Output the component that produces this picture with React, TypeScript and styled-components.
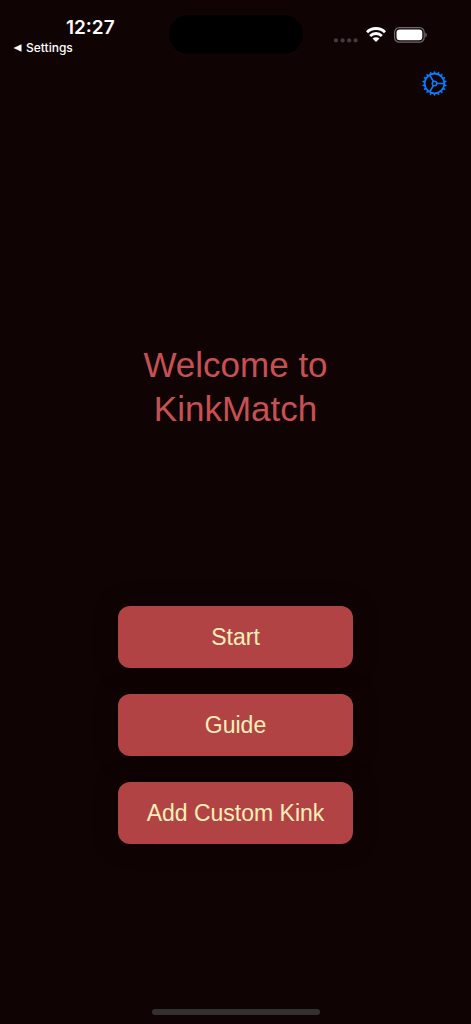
import React from "react";
import styled, { createGlobalStyle } from "styled-components";

const GlobalStyle = createGlobalStyle`
  *, *::before, *::after { box-sizing: border-box; }
  body {
    margin: 0;
    background: #100304;
    font-family: Inter, "Liberation Sans", sans-serif;
  }
`;

const Screen = styled.div`
  display: flex;
  flex-direction: column;
  min-height: 100vh;
  background: #100304;
`;

const StatusBar = styled.header`
  display: grid;
  grid-template-columns: 1fr 134px 1fr;
  align-items: start;
  padding-top: 15px;
`;

const ClockArea = styled.div`
  display: flex;
  flex-direction: column;
  align-items: flex-start;
  color: #fff;
`;

const Clock = styled.time`
  align-self: stretch;
  padding-left: 12px;
  text-align: center;
  font-size: 19px;
  font-weight: 600;
  line-height: 25px;
`;

const BackLink = styled.a`
  display: flex;
  align-items: center;
  gap: 4px;
  padding-left: 13px;
  color: #fff;
  font-size: 12px;
  font-weight: 500;
  line-height: 15px;
  text-decoration: none;
`;

const Island = styled.div`
  height: 39px;
  border-radius: 20px;
  background: #000;
`;

const Indicators = styled.div`
  display: flex;
  align-items: center;
  justify-content: flex-end;
  gap: 8px;
  height: 39px;
  padding-right: 44px;
`;

const Toolbar = styled.nav`
  display: flex;
  justify-content: flex-end;
  padding: 16px 23px 0;
`;

const IconButton = styled.button`
  display: flex;
  padding: 0;
  border: 0;
  background: none;
  color: #0a7dff;
  cursor: pointer;
`;

const Main = styled.main`
  flex: 1;
  display: flex;
  flex-direction: column;
  align-items: center;
  justify-content: center;
  padding: 88px 24px 0;
`;

const Title = styled.h1`
  margin: 0 0 175px;
  color: #c75052;
  font-family: "Liberation Sans", Arial, sans-serif;
  font-size: 35px;
  font-weight: 400;
  line-height: 44px;
  text-align: center;
`;

const Actions = styled.div`
  display: flex;
  flex-direction: column;
  gap: 26px;
  width: 235px;
`;

const ActionButton = styled.button`
  height: 62px;
  padding: 0;
  border: 0;
  border-radius: 12px;
  background: #b24344;
  box-shadow: 0 0 24px rgba(0, 0, 0, 0.35);
  color: #ffefba;
  font-family: "Liberation Sans", Arial, sans-serif;
  font-size: 23px;
  font-weight: 400;
  line-height: 30px;
  white-space: nowrap;
  cursor: pointer;
`;

const HomeArea = styled.footer`
  display: flex;
  justify-content: center;
  padding: 8px 0 9px;
`;

const HomeIndicator = styled.div`
  width: 168px;
  height: 6px;
  border-radius: 3px;
  background: #353030;
`;

const CellularIcon = () => (
  <svg width="24" height="16" viewBox="0 0 24 16" fill="#433b3c" aria-hidden="true">
    {[2, 8.6, 15.2, 21.6].map((x) => (
      <circle key={x} cx={x} cy="13.4" r="2.1" />
    ))}
  </svg>
);

const WifiIcon = () => (
  <svg width="20" height="15" viewBox="0 0 20 15" aria-hidden="true">
    <g fill="none" stroke="#fff" strokeWidth="2.9">
      <path d="M1 5.2a12.8 12.8 0 0 1 18 0" />
      <path d="M4.2 8.9a8.2 8.2 0 0 1 11.6 0" />
    </g>
    <path fill="#fff" d="M10 15 6.5 11.6a5 5 0 0 1 7 0Z" />
  </svg>
);

const BatteryIcon = () => (
  <svg width="33" height="16" viewBox="0 0 33 16" aria-hidden="true">
    <rect x="0.6" y="0.6" width="29.6" height="14.6" rx="4.8" fill="none" stroke="#716a6b" strokeWidth="1.2" />
    <rect x="2.5" y="2.5" width="25.8" height="10.8" rx="3.2" fill="#fff" />
    <path d="M31.3 5.4c2 .8 2 4.2 0 5Z" fill="#716a6b" />
  </svg>
);

const GearIcon = () => (
  <svg width="26" height="26" viewBox="0 0 26 26" fill="none" stroke="currentColor" aria-hidden="true">
    <circle cx="12.5" cy="12.5" r="9.8" strokeWidth="1.7" />
    <circle cx="12.5" cy="12.5" r="2.3" strokeWidth="1.4" />
    <path d="M14.8 12.5h7.5M11.4 10.5 7.6 4M11.4 14.5 7.6 21" strokeWidth="1.5" />
    {Array.from({ length: 18 }, (_, i) => (
      <path key={i} d="M11.6 2.2 12 .4h1l.4 1.8Z" fill="currentColor" strokeWidth="0.3" transform={`rotate(${i * 20} 12.5 12.5)`} />
    ))}
  </svg>
);

const actions = ["Start", "Guide", "Add Custom Kink"];

export default function App() {
  return (
    <>
      <GlobalStyle />
      <Screen>
        <StatusBar>
          <ClockArea>
            <Clock>12:27</Clock>
            <BackLink href="#settings">
              <svg width="9" height="8" viewBox="0 0 9 8" fill="#fff" aria-hidden="true">
                <path d="M.5 4 8.5.2v7.6Z" />
              </svg>
              Settings
            </BackLink>
          </ClockArea>
          <Island />
          <Indicators>
            <CellularIcon />
            <WifiIcon />
            <BatteryIcon />
          </Indicators>
        </StatusBar>
        <Toolbar>
          <IconButton type="button" aria-label="Preferences">
            <GearIcon />
          </IconButton>
        </Toolbar>
        <Main>
          <Title>
            Welcome to
            <br />
            KinkMatch
          </Title>
          <Actions>
            {actions.map((label) => (
              <ActionButton key={label} type="button">
                {label}
              </ActionButton>
            ))}
          </Actions>
        </Main>
        <HomeArea>
          <HomeIndicator />
        </HomeArea>
      </Screen>
    </>
  );
}
